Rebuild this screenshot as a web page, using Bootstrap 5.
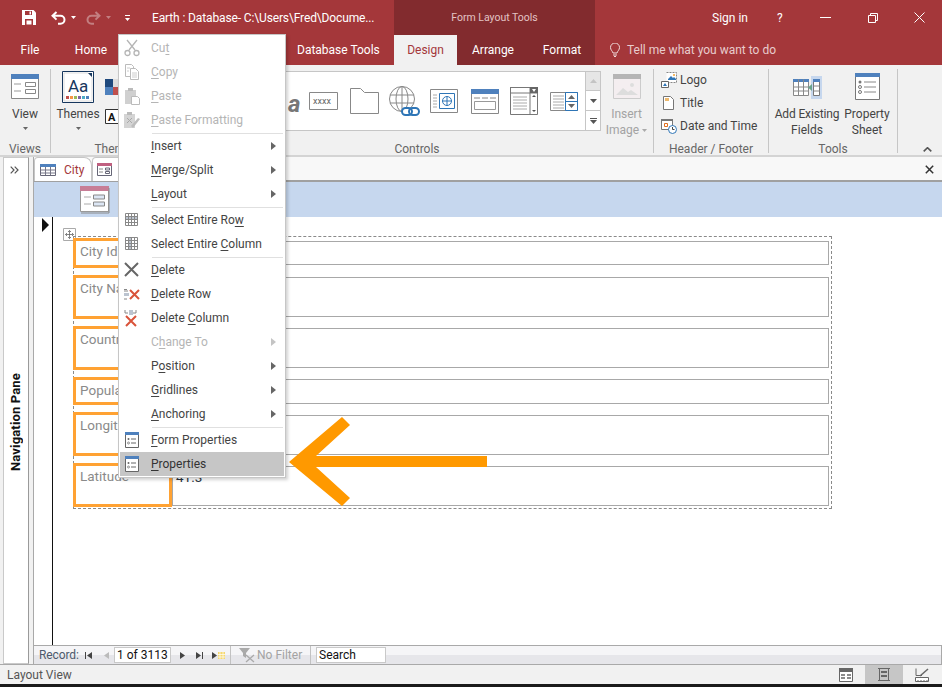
<!DOCTYPE html>
<html lang="en">
<head>
<meta charset="utf-8">
<title>Earth : Database</title>
<link href="https://cdn.jsdelivr.net/npm/bootstrap@5.3.0/dist/css/bootstrap.min.css" rel="stylesheet">
<style>
html,body{height:687px;overflow:hidden}
body{width:942px;font-family:Roboto,"Liberation Sans",sans-serif;font-size:12px;line-height:16px;color:#444;background:#fff}
svg{display:block;flex:none}
.shell{height:687px;position:relative}
.title-row{height:35px;background:#a4373a;color:#fff}
.qat{width:394px;padding-left:22px}
.qat .ttl{margin-left:22px;white-space:nowrap;letter-spacing:-.13px}
.ctx-band{width:201px;background:#822b2e;color:#e3c3c4;font-size:10.5px}
.sign{margin-left:117px;width:36px}
.tab-row{height:30px;background:#a4373a;color:#fff}
.rtab{height:30px;display:flex;align-items:center;justify-content:center;white-space:nowrap}
.rtab-file{width:60px}.rtab-home{width:62px}.rtab-hid{width:175px}.rtab-db{width:97px;justify-content:flex-start}
.ctx-tabs{width:201px;background:#822b2e}
.rtab-on{width:63px;background:#f1f1f1;color:#a4373a}
.rtab-arr{width:72px}.rtab-fmt{width:66px}
.tell{margin-left:15px;color:#e8cccd;gap:7px}
.ribbon{height:92px;background:#f1f1f1;padding-top:4px;border-bottom:2px solid #d4d4d4}
.grp{height:88px;display:flex;flex-direction:column}
.grp-body{height:72px}
.grp-label{height:16px;text-align:center;color:#666}
.rsep{width:1px;height:84px;background:#c6c6c6}
.g-views{width:50px}.g-themes{width:130px}.g-controls{width:472px}.g-hf{width:114px}.g-tools{width:128px}
.bigbtn{display:flex;flex-direction:column;align-items:center;text-align:center}
.gal{margin:2px 0 0 6px;width:399px;height:60px;background:#fff;border:1px solid #c6c6c6;padding-left:100px}
.galscroll{margin-top:2px;width:15px}
.galscroll div{height:20px;background:#fff;border:1px solid #c6c6c6;border-left:0;display:flex;align-items:center;justify-content:center}
.galscroll div+div{border-top:0}
.galscroll .off{background:#e6e6e6}
.dis{color:#a3a3a3}
.hf-list{margin-top:-1px}
.hf-row{height:23px;padding-left:7px;gap:3px}
.doc-wrap{height:507px}
.nav-col{width:34px;background:#f1f1f1;padding-left:3px}
.nav-box{width:26px;height:100%;background:#fff;border:1px solid #c9c9c9;border-right-color:#9a9a9a;position:relative}
.nav-top{height:24px;padding-right:4px}
.nav-txt{flex:1;writing-mode:vertical-rl;transform:rotate(180deg);font-weight:700;color:#111;font-size:13px;line-height:24px;text-align:center;letter-spacing:.15px}
.nav-rail{width:5px;background:#f1f1f1;border-right:1px solid #a9a9a9}
.doc-tabs{height:25px;background:#f8f8f8;border-bottom:2px solid #a0a0a0;position:relative}
.dtab{height:24px;background:#fff;border:1px solid #c6c6c6;border-bottom:0;border-top-left-radius:4px;border-top-right-radius:8px;gap:8px;padding:0 5px;color:#a4373a}
.dtab-a{width:58px}.dtab-b{width:60px;padding-left:4px}
.doc-close{position:absolute;right:8px;top:8px}
.form-band{height:35px;background:#c6d7ee;padding:4px 0 0 45px}
.form-body{height:428px;position:relative}
.selcol{width:19px;border-right:1.5px solid #111;padding:1px 0 0 8px}
.layout-outer{position:absolute;left:39px;top:19px;width:759px;height:273px;border:1px dashed #8a8a8a;padding:1px 0 0 0}
.frow{margin:0 0 7px -1px}
.flab{width:99px;border:3px solid #ffa233;color:#8a8a8a;font-size:13.5px;padding:2px 0 0 4px;line-height:17px;overflow:hidden;white-space:nowrap}
.fval{width:657px;border:1px solid #a8a8a8;color:#2a3340;font-size:13.5px;padding:2px 3px;line-height:16px}
.r1{height:30px}.r1 .fval{height:24px;margin-top:3px}
.r2{height:44px}.r2 .fval{height:40px;margin-top:2px}
.r3{height:44px}.r3 .fval{height:40px;margin-top:2px}
.r4{height:28px}.r4 .fval{height:25px;margin-top:2px}
.r5{height:44px}.r5 .fval{height:40px;margin-top:3px}
.r6{height:44px}.r6 .fval{height:40px;margin-top:3px}
.mover{position:absolute;left:29px;top:11px}
.rec-bar{height:19px;background:linear-gradient(#f5f5f7 0 50%,#e6e6ea 50%);border-top:1px solid #a9a9a9;border-right:1px solid #a9a9a9;color:#4d5a6d;padding-left:5px}
.rec-lab{width:40px;white-space:nowrap;letter-spacing:-.1px}
.rec-in{width:57px;height:16px;background:#fff;border:1px solid #c9c9c9;color:#111;padding-left:2px;line-height:14px}
.rec-div{width:1px;height:19px;background:#c2c2c2}
.status{height:20px;background:#f1f1f1;border-top:1px solid #a9a9a9;color:#555;padding-left:7px}
.vbtn{width:38px;height:19px;display:flex;align-items:center;justify-content:center}
.vbtn-on{background:#c6c6c6}
.blackline{height:3px;background:#1a1a1a}
.ctx-menu{position:absolute;left:118px;top:34px;width:168px;height:444px;background:#fff;border:1px solid #c6c6c6;box-shadow:2px 2px 3px rgba(0,0,0,.18);padding:1px 1px;z-index:5}
.mi{height:24px;position:relative;padding-left:31px;line-height:24px;color:#444;white-space:nowrap}
.mi.off{color:#b5b5b5}
.mi.sel{background:#c6c6c6;color:#333}
.mi u{text-underline-offset:2px}
.mi .mic{position:absolute;left:3px;top:3px}
.mi .mar{position:absolute;right:8px;top:8px;width:0;height:0;border-left:5px solid #666;border-top:4px solid transparent;border-bottom:4px solid transparent}
.mi.off .mar{border-left-color:#c4c4c4}
.msep{height:1px;background:#e0e0e0;margin:.5px 1px .5px 32px}
.big-arrow{position:absolute;left:289px;top:417px;z-index:6}
</style>
</head>
<body>
<div class="shell d-flex flex-column">
  <div class="title-row d-flex align-items-center">
    <div class="qat d-flex align-items-center">
      <svg width="14" height="15" viewBox="0 0 14 15"><path d="M0 0h11.500L14 2.500V15H0z" fill="#fff"/><path d="M3 1h7v4H3zM3 9h8v6H3z" fill="#a4373a"/><path d="M7.500 1.500h1.500v3H7.500zM4.500 10.500h5v4h-5z" fill="#fff"/></svg>
      <svg style="margin-left:15px" width="15" height="14" viewBox="0 0 15 14"><path d="M5.500 1 1.500 4.800l4 3.800M2 4.800h7.500a4 4 0 0 1 0 8H7" fill="none" stroke="#fff" stroke-width="2"/></svg>
      <svg style="margin-left:5px" width="5" height="3" viewBox="0 0 5 3"><path d="M0 0h5L2.500 3z" fill="#fff"/></svg>
      <svg style="margin-left:10px" width="15" height="14" viewBox="0 0 15 14"><path d="M9.500 1l4 3.800-4 3.800M13 4.800H5.500a4 4 0 0 0 0 8H8" fill="none" stroke="#c37f81" stroke-width="2"/></svg>
      <svg style="margin-left:5px" width="5" height="3" viewBox="0 0 5 3"><path d="M0 0h5L2.500 3z" fill="#c37f81"/></svg>
      <svg style="margin-left:14px" width="5" height="6" viewBox="0 0 5 6"><path d="M0 0h5v1H0zM0 3h5L2.500 6z" fill="#fff"/></svg>
      <span class="ttl">Earth : Database- C:\Users\Fred\Docume...</span>
    </div>
    <div class="ctx-band h-100 d-flex align-items-center justify-content-center">Form Layout Tools</div>
    <span class="sign">Sign in</span>
    <span style="margin-left:29px">?</span>
    <svg style="margin-left:37px" width="11" height="1" viewBox="0 0 11 1"><path d="M0 0h11v1H0z" fill="#fff"/></svg>
    <svg style="margin-left:37px" width="10" height="10" viewBox="0 0 10 10"><path d="M.5 2.500h7v7h-7zM2.500 2.500v-2h7v7h-2" fill="none" stroke="#fff"/></svg>
    <svg style="margin-left:36px" width="11" height="11" viewBox="0 0 11 11"><path d="M.5.500l10 10M10.500.500l-10 10" stroke="#fff" fill="none"/></svg>
  </div>
  <div class="tab-row d-flex">
    <div class="rtab rtab-file">File</div>
    <div class="rtab rtab-home">Home</div>
    <div class="rtab rtab-hid"></div>
    <div class="rtab rtab-db">Database Tools</div>
    <div class="ctx-tabs d-flex">
      <div class="rtab rtab-on">Design</div>
      <div class="rtab rtab-arr">Arrange</div>
      <div class="rtab rtab-fmt">Format</div>
    </div>
    <div class="tell d-flex align-items-center">
      <svg width="10" height="14" viewBox="0 0 10 14"><path d="M3 10C2.500 8 .500 7 .500 4.500a4.500 4.500 0 0 1 9 0C9.500 7 7.500 8 7 10zM3 12h4M4 13.500h2" fill="none" stroke="#f0dcdc"/></svg>
      <span>Tell me what you want to do</span>
    </div>
  </div>

  <div class="ribbon d-flex">
    <div class="grp g-views">
      <div class="grp-body bigbtn" style="padding-top:5px">
        <svg width="28" height="25" viewBox="0 0 28 25"><path d="M.5.500h27v24H.5z" fill="#fff" stroke="#888"/><path d="M0 0h28v5H0z" fill="#4f81bd"/><path d="M3 10h7M3 17h7" stroke="#999"/><path d="M14.500 8.500h10v4h-10zM14.500 15.500h10v4h-10z" fill="none" stroke="#888"/></svg>
        <span style="margin-top:7px">View</span>
        <svg style="margin-top:5px" width="5" height="3" viewBox="0 0 5 3"><path d="M0 0h5L2.500 3z" fill="#666"/></svg>
      </div>
      <div class="grp-label">Views</div>
    </div>
    <div class="rsep"></div>
    <div class="grp g-themes">
      <div class="grp-body d-flex">
        <div class="bigbtn" style="width:54px">
          <svg style="margin-top:2px" width="32" height="32" viewBox="0 0 32 32"><path d="M.5.500h31v31H.5z" fill="#fff" stroke="#17375e"/><path d="M2 2h24l4 4v24H2z" fill="#fff" stroke="#bbb" stroke-width=".5"/><path d="M26 2h4v4z" fill="#17375e"/><text x="6" y="21" font-family="Roboto,sans-serif" font-size="17" fill="#17375e">Aa</text><path d="M4 25h3v3H4z" fill="#c0504d"/><path d="M8 25h3v3H8z" fill="#f79646"/><path d="M12 25h3v3h-3z" fill="#9bbb59"/><path d="M16 25h3v3h-3z" fill="#8064a2"/><path d="M20 25h3v3h-3z" fill="#4bacc6"/><path d="M24 25h3v3h-3z" fill="#4f81bd"/></svg>
          <span style="margin-top:3px">Themes</span>
          <svg style="margin-top:5px" width="5" height="3" viewBox="0 0 5 3"><path d="M0 0h5L2.500 3z" fill="#666"/></svg>
        </div>
        <div class="d-flex flex-column" style="gap:14px;padding-top:10px">
          <svg width="16" height="16" viewBox="0 0 16 16"><path d="M0 0h8v8H0z" fill="#1f497d"/><path d="M8 0h8v8H8z" fill="#ddd"/><path d="M0 8h8v8H0z" fill="#4f81bd"/><path d="M8 8h8v8H8z" fill="#c0504d"/></svg>
          <svg width="14" height="15" viewBox="0 0 14 15"><path d="M.5.500h13v14H.5z" fill="#fff" stroke="#333"/><text x="3" y="12" font-family="Roboto,sans-serif" font-size="11" font-weight="700" fill="#111">A</text></svg>
        </div>
      </div>
      <div class="grp-label">Themes</div>
    </div>
    <div class="grp g-controls">
      <div class="grp-body d-flex">
        <div class="gal d-flex align-items-center">
          <span style="font-size:24px;font-style:italic;color:#777;font-weight:700;width:21px;margin-top:6px">a</span>
          <svg width="29" height="18" viewBox="0 0 29 18"><path d="M.5.500h28v17H.5z" fill="#fff" stroke="#888"/><text x="4" y="12" font-family="Roboto,sans-serif" font-size="9" fill="#666">xxxx</text></svg>
          <svg style="margin-left:12px" width="29" height="26" viewBox="0 0 29 26"><path d="M.5 25.500V.500h10l4 4h14v21z" fill="#fff" stroke="#888"/></svg>
          <svg style="margin-left:10px" width="32" height="31" viewBox="0 0 32 31"><g fill="none" stroke="#888"><circle cx="13" cy="13" r="12.500"/><ellipse cx="13" cy="13" rx="6" ry="12.500"/><path d="M13 .500v25M1 9h24M1 17h24"/></g><rect x="13" y="22" width="10" height="7" rx="3.500" fill="#fff" stroke="#2e75b6" stroke-width="2"/><rect x="20" y="22" width="10" height="7" rx="3.500" fill="none" stroke="#2e75b6" stroke-width="2"/></svg>
          <svg style="margin-left:9px" width="28" height="24" viewBox="0 0 28 24"><path d="M.5.500h27v23H.5z" fill="#fff" stroke="#888"/><path d="M3 6h4M3 9h4M3 12h4M3 15h4M3 18h4" stroke="#aaa"/><path d="M9.500 4.500h15v15h-15z" fill="#fff" stroke="#2e75b6"/><circle cx="17" cy="12" r="4.500" fill="none" stroke="#2e75b6"/><path d="M12.500 12h9M17 7.500v9" stroke="#2e75b6"/></svg>
          <svg style="margin-left:13px" width="28" height="25" viewBox="0 0 28 25"><path d="M.5.500h27v24H.5z" fill="#fff" stroke="#888"/><path d="M0 0h28v5H0z" fill="#4f81bd"/><path d="M3 9h6M11 9h6M19 9h6" stroke="#888"/><path d="M3.500 12.500h21v8h-21z" fill="none" stroke="#999"/></svg>
          <svg style="margin-left:11px" width="28" height="28" viewBox="0 0 28 28"><path d="M.5.500h27v27H.5z" fill="#fff" stroke="#777"/><path d="M0 .500h28M.5 6h27M20 .500v27" stroke="#777"/><path d="M20 0h8v6h-8z" fill="#666"/><path d="M22 2h4l-2 3z" fill="#fff"/><path d="M3 10h14M3 13h14M3 16h14M3 19h14M3 22h14" stroke="#aaa"/><path d="M22 10h4l-2-2zM22 23h4l-2 2z" fill="#555"/></svg>
          <svg style="margin-left:12px" width="28" height="19" viewBox="0 0 28 19"><path d="M.5.500h27v18H.5z" fill="#fff" stroke="#888"/><path d="M3 4h11M3 7h11M3 10h11M3 13h11M3 16h11" stroke="#aaa"/><path d="M15.500.500h12v18h-12zM15.500 9.500h12" fill="none" stroke="#2e75b6"/><path d="M18 7h7l-3.500-4zM18 12h7l-3.500 4z" fill="#666"/></svg>
        </div>
        <div class="galscroll">
          <div class="off"><svg width="7" height="4" viewBox="0 0 7 4"><path d="M0 4h7L3.500 0z" fill="#c4c4c4"/></svg></div>
          <div><svg width="7" height="4" viewBox="0 0 7 4"><path d="M0 0h7L3.500 4z" fill="#555"/></svg></div>
          <div><svg width="7" height="6" viewBox="0 0 7 6"><path d="M0 0h7v1H0zM0 2h7L3.500 6z" fill="#555"/></svg></div>
        </div>
        <div class="bigbtn dis" style="width:51px;padding-top:5px">
          <svg width="28" height="25" viewBox="0 0 28 25"><path d="M.5.500h27v24H.5z" fill="#f4eef0" stroke="#ccc"/><path d="M0 0h28v5H0z" fill="#b5b5b5"/><path d="M3 21l7-7 5 4 3-2 7 5z" fill="#ddd"/><circle cx="19" cy="11" r="2" fill="#ddd"/></svg>
          <span style="margin-top:7px">Insert</span>
          <span>Image<svg class="d-inline" style="margin-left:3px;vertical-align:middle" width="5" height="3" viewBox="0 0 5 3"><path d="M0 0h5L2.500 3z" fill="#aaa"/></svg></span>
        </div>
      </div>
      <div class="grp-label">Controls</div>
    </div>
    <div class="rsep"></div>
    <div class="grp g-hf">
      <div class="grp-body hf-list">
        <div class="hf-row d-flex align-items-center">
          <svg width="16" height="16" viewBox="0 0 16 16"><path d="M5.500.500h10v10h-10" fill="#fff" stroke="#888" stroke-dasharray="2 1"/><path d="M7 7l3-3 2 2 1-1 2 2v1H7z" fill="#2e75b6"/><circle cx="13" cy="3" r="1" fill="#f0a030"/><path d="M.5 9.500h7v6h-7z" fill="#fff" stroke="#666"/><path d="M2 14l2-3 2 3z" fill="#2e75b6"/></svg>
          <span>Logo</span>
        </div>
        <div class="hf-row d-flex align-items-center">
          <svg style="margin-left:2px;margin-right:3px" width="11" height="14" viewBox="0 0 11 14"><path d="M.5.500h7l3 3v10H.5z" fill="#fff" stroke="#777"/><path d="M2 2h4v3H2z" fill="#edb96e"/></svg>
          <span>Title</span>
        </div>
        <div class="hf-row d-flex align-items-center">
          <svg width="16" height="16" viewBox="0 0 16 16"><path d="M.5 1.500h11v10H.5z" fill="#fff" stroke="#777"/><path d="M0 1h12v2H0z" fill="#777"/><path d="M3.500 5.500h3v3h-3z" fill="none" stroke="#e07020"/><circle cx="11.500" cy="11.500" r="4" fill="#fff" stroke="#2e75b6"/><path d="M11.500 9v2.500h2" fill="none" stroke="#444"/></svg>
          <span>Date and Time</span>
        </div>
      </div>
      <div class="grp-label" style="margin-top:1px">Header / Footer</div>
    </div>
    <div class="rsep"></div>
    <div class="grp g-tools">
      <div class="grp-body d-flex">
        <div class="bigbtn" style="width:76px;padding-top:7px">
          <svg width="29" height="23" viewBox="0 0 29 23"><path d="M18 0h11v23H18z" fill="#c6d7ee"/><path d="M.5 3.500h15v16H.5z" fill="#fff" stroke="#888"/><path d="M0 3h16v3H0z" fill="#4f81bd"/><path d="M.5 11h15M.5 15h15M5.500 3.500v16M10.500 3.500v16" stroke="#888"/><path d="M20.500 3.500h6v16h-6z" fill="#fff" stroke="#777"/><path d="M20 3h7v3h-7z" fill="#4f81bd"/><path d="M20.500 10h6M20.500 15h6" stroke="#888"/><path d="M19 8v7l-4-3.500z" fill="#6aa58e"/></svg>
          <span style="margin-top:7px;white-space:nowrap;letter-spacing:-.15px">Add Existing</span>
          <span>Fields</span>
        </div>
        <div class="bigbtn" style="width:50px;margin-left:-3px;padding-top:4px">
          <svg width="25" height="27" viewBox="0 0 25 27"><path d="M.5.500h24v26H.5z" fill="#fff" stroke="#777"/><path d="M0 0h25v4H0z" fill="#4f81bd"/><path d="M9 9h12M9 14h12M9 19h12" stroke="#888"/><circle cx="5" cy="9" r="1.500" fill="#777"/><circle cx="5" cy="14" r="1.500" fill="none" stroke="#777"/><circle cx="5" cy="19" r="1.500" fill="none" stroke="#777"/></svg>
          <span style="margin-top:6px;white-space:nowrap">Property</span>
          <span>Sheet</span>
        </div>
      </div>
      <div class="grp-label">Tools</div>
    </div>
    <div class="rsep"></div>
    <div class="ms-auto align-self-end" style="padding:0 10px 3px 0"><svg width="9" height="5" viewBox="0 0 9 5"><path d="M.7 4.300l3.800-3.600 3.800 3.600" fill="none" stroke="#555" stroke-width="1.600"/></svg></div>
  </div>

  <div class="doc-wrap d-flex">
    <div class="nav-col d-flex">
      <div class="nav-box d-flex flex-column">
        <div class="nav-top d-flex align-items-center justify-content-center"><svg width="9" height="8" viewBox="0 0 9 8"><path d="M.7.700l3.300 3.300-3.300 3.300M4.700.700l3.300 3.300-3.300 3.300" fill="none" stroke="#555" stroke-width="1.200"/></svg></div>
        <div class="nav-txt">Navigation Pane</div>
      </div>
      <div class="nav-rail"></div>
    </div>
    <div class="flex-fill d-flex flex-column">
      <div class="doc-tabs d-flex">
        <div class="dtab dtab-a d-flex align-items-center">
          <svg width="16" height="12" viewBox="0 0 16 12"><path d="M.5.500h15v11H.5z" fill="#fff" stroke="#667"/><path d="M0 0h16v3H0z" fill="#4f81bd"/><path d="M.5 6h15M.5 9h15M5.500 3v8M10.500 3v8" stroke="#778"/></svg>
          <span>City</span>
        </div>
        <div class="dtab dtab-b d-flex align-items-center">
          <svg width="15" height="13" viewBox="0 0 15 13"><path d="M.5.500h14v12H.5z" fill="#fff" stroke="#667"/><path d="M0 0h15v3H0z" fill="#c06080"/><path d="M2 6h4M2 9h4" stroke="#888"/><path d="M8.500 5h4v2h-4zM8.500 8.500h4v2h-4z" fill="none" stroke="#667"/></svg>
        </div>
        <svg class="doc-close" width="9" height="9" viewBox="0 0 9 9"><path d="M.8.800l7.400 7.400M8.200.800l-7.400 7.400" stroke="#333" stroke-width="1.500"/></svg>
      </div>
      <div class="form-band d-flex align-items-start">
        <svg width="31" height="28" viewBox="0 0 31 28"><path d="M1.500.500h28v25h-28z" fill="#fff" stroke="#999"/><path d="M1 0h29v5H1z" fill="#c77d96"/><path d="M5 11h7M5 18h7" stroke="#aaa"/><path d="M14.500 9h11v4h-11zM14.500 16h11v4h-11z" fill="#dce6f4" stroke="#888"/><path d="M30 2v25H2" fill="none" stroke="#8a8a8a"/></svg>
      </div>
      <div class="form-body d-flex">
        <div class="selcol"><svg width="7" height="14" viewBox="0 0 7 14"><path d="M0 0l7 7-7 7z" fill="#111"/></svg></div>
        <svg class="mover" width="13" height="13" viewBox="0 0 13 13"><path d="M.5.500h12v12H.5z" fill="#fff" stroke="#aaa"/><path d="M6.500 2.500v8M2.500 6.500h8M5 4l1.500-1.500L8 4M5 9l1.500 1.500L8 9M4 5L2.500 6.500 4 8M9 5l1.500 1.500L9 8" fill="none" stroke="#666" stroke-width=".8"/></svg>
        <div class="layout-outer">
          <div class="frow r1 d-flex"><div class="flab">City Id</div><div class="fval"></div></div>
          <div class="frow r2 d-flex"><div class="flab">City Name</div><div class="fval"></div></div>
          <div class="frow r3 d-flex"><div class="flab">Country</div><div class="fval"></div></div>
          <div class="frow r4 d-flex"><div class="flab">Population</div><div class="fval"></div></div>
          <div class="frow r5 d-flex"><div class="flab">Longitude</div><div class="fval"></div></div>
          <div class="frow r6 d-flex"><div class="flab">Latitude</div><div class="fval">41.3</div></div>
        </div>
      </div>
      <div class="rec-bar d-flex align-items-center">
        <span class="rec-lab">Record:</span>
        <svg style="margin-left:6px" width="7" height="7" viewBox="0 0 7 7"><path d="M0 0h1v7H0zM7 0v7L2 3.500z" fill="#444"/></svg>
        <svg style="margin-left:12px" width="5" height="7" viewBox="0 0 5 7"><path d="M5 0v7L0 3.500z" fill="#bbb"/></svg>
        <div class="rec-in" style="margin-left:5px">1 of 3113</div>
        <svg style="margin-left:9px" width="5" height="7" viewBox="0 0 5 7"><path d="M0 0v7l5-3.500z" fill="#444"/></svg>
        <svg style="margin-left:11px" width="7" height="7" viewBox="0 0 7 7"><path d="M7 0H6v7h1zM0 0v7l5-3.500z" fill="#444"/></svg>
        <svg style="margin-left:9px" width="13" height="7" viewBox="0 0 13 7"><path d="M0 0v7l5-3.500z" fill="#444"/><path d="M6 0h7v7H6z" fill="#f5d76e"/><path d="M8 0v7M11 0v7M6 2.500h7M6 5h7" stroke="#fff" stroke-width=".7"/></svg>
        <div class="rec-div" style="margin-left:5px"></div>
        <svg style="margin-left:8px" width="16" height="15" viewBox="0 0 16 15"><path d="M0 0h11L7 5v5L4 8V5z" fill="#aaa"/><path d="M7 7l8 7M15 7l-8 7" stroke="#aaa" stroke-width="1.300"/></svg>
        <span class="dis" style="margin-left:2px;width:44px;white-space:nowrap">No Filter</span>
        <div class="rec-div" style="margin-left:9px"></div>
        <div class="rec-in" style="margin-left:5px;width:70px">Search</div>
      </div>
    </div>
  </div>

  <div class="status d-flex align-items-center">
    <span>Layout View</span>
    <div class="ms-auto d-flex">
      <div class="vbtn"><svg width="14" height="14" viewBox="0 0 14 14"><path d="M.5.500h13v13H.5z" fill="#fff" stroke="#666"/><path d="M0 0h14v4H0z" fill="#666"/><path d="M2 7h4M8 7h4M2 10h4M8 10h4" stroke="#666" stroke-width="1.500"/></svg></div>
      <div class="vbtn vbtn-on"><svg width="12" height="13" viewBox="0 0 12 13"><path d="M0 .500h12M0 12.500h12M1.500 0v13M10.500 0v13" stroke="#666"/><path d="M3 4h6M3 8h6" stroke="#666" stroke-width="2"/></svg></div>
      <div class="vbtn" style="margin-right:1px"><svg width="14" height="14" viewBox="0 0 14 14"><path d="M.5 9.500h13v4H.5z" fill="#fff" stroke="#666"/><path d="M3 12v1M6 12v1M9 12v1M12 12v1" stroke="#666"/><path d="M1 .500v7M1 7.500h6" stroke="#666"/><path d="M5 8l8-7" stroke="#666" stroke-width="1.500"/></svg></div>
    </div>
  </div>
  <div class="blackline"></div>

  <div class="ctx-menu">
    <div class="mi off"><svg class="mic" width="18" height="18" viewBox="0 0 18 18"><g fill="none" stroke="#b5b5b5" stroke-width="1.300"><path d="M4 1l8 10M14 1L6 11"/><circle cx="4.500" cy="14" r="2.500"/><circle cx="13.500" cy="14" r="2.500"/></g></svg>Cu<u>t</u></div>
    <div class="mi off"><svg class="mic" width="18" height="18" viewBox="0 0 18 18"><path d="M2.500 1.500h6l2 2v10h-8z" fill="#fff" stroke="#bbb"/><path d="M7.500 5.500h5l3 3v8h-8z" fill="#fff" stroke="#bbb"/><path d="M9 10h5M9 12h5M9 14h5M4 5h3M4 8h2" stroke="#ccc"/></svg><u>C</u>opy</div>
    <div class="mi off"><svg class="mic" width="18" height="18" viewBox="0 0 18 18"><path d="M2 3h11v14H2z" fill="#d0d0d0"/><path d="M5 1h5v3H5z" fill="#bbb"/><path d="M8.500 9.500h6l2 2v6h-8z" fill="#fff" stroke="#bbb"/></svg><u>P</u>aste</div>
    <div class="mi off"><svg class="mic" width="18" height="18" viewBox="0 0 18 18"><path d="M1 3h11v14H1z" fill="#d4d4d4"/><path d="M4 1h5v3H4z" fill="#bbb"/><path d="M4 7l5 5M9 7l-5 5" stroke="#aaa"/><path d="M10 17l7-9-2-1-7 8z" fill="#bdbdbd"/></svg><u>P</u>aste Formatting</div>
    <div class="msep"></div>
    <div class="mi"><u>I</u>nsert<span class="mar"></span></div>
    <div class="mi"><u>M</u>erge/Split<span class="mar"></span></div>
    <div class="mi"><u>L</u>ayout<span class="mar"></span></div>
    <div class="msep"></div>
    <div class="mi"><svg class="mic" width="18" height="18" viewBox="0 0 18 18"><path d="M2.500 2.500h12v12h-12z" fill="#fff" stroke="#888"/><path d="M3 6h11v3H3z" fill="#bcc4d0"/><path d="M2.500 5.500h12M2.500 8.500h12M2.500 11.500h12M5.500 2.500v12M8.500 2.500v12M11.500 2.500v12" stroke="#888"/></svg>Select Entire Ro<u>w</u></div>
    <div class="mi"><svg class="mic" width="18" height="18" viewBox="0 0 18 18"><path d="M2.500 2.500h12v12h-12z" fill="#fff" stroke="#888"/><path d="M6 3h3v11H6z" fill="#bcc4d0"/><path d="M2.500 5.500h12M2.500 8.500h12M2.500 11.500h12M5.500 2.500v12M8.500 2.500v12M11.500 2.500v12" stroke="#888"/></svg>Select Entire <u>C</u>olumn</div>
    <div class="msep"></div>
    <div class="mi"><svg class="mic" width="18" height="18" viewBox="0 0 18 18"><path d="M2 2l13 13M15 2L2 15" stroke="#666" stroke-width="2"/></svg><u>D</u>elete</div>
    <div class="mi"><svg class="mic" width="18" height="18" viewBox="0 0 18 18"><path d="M1 6h4M1 4.500h3M1 14h3" stroke="#888"/><path d="M1 8h5v3H1z" fill="#bcc4d0"/><path d="M7 5l9 9M16 5l-9 9" stroke="#d9533a" stroke-width="2"/></svg><u>D</u>elete Row</div>
    <div class="mi"><svg class="mic" width="18" height="18" viewBox="0 0 18 18"><path d="M2 1v3h3M13 1v3h-3" fill="none" stroke="#888"/><path d="M6 1h4v5H6z" fill="#bcc4d0"/><path d="M3 7l10 10M13 7L3 17" stroke="#d9533a" stroke-width="2"/></svg>Delete <u>C</u>olumn</div>
    <div class="mi off">C<u>h</u>ange To<span class="mar"></span></div>
    <div class="mi">P<u>o</u>sition<span class="mar"></span></div>
    <div class="mi"><u>G</u>ridlines<span class="mar"></span></div>
    <div class="mi"><u>A</u>nchoring<span class="mar"></span></div>
    <div class="msep"></div>
    <div class="mi"><svg class="mic" width="18" height="18" viewBox="0 0 18 18"><path d="M2.500 1.500h13v15h-13z" fill="#fff" stroke="#666"/><path d="M2 1h14v3H2z" fill="#4f81bd"/><path d="M8 8h5M8 12h5" stroke="#666"/><circle cx="5.500" cy="8" r="1" fill="#666"/><circle cx="5.500" cy="12" r="1" fill="none" stroke="#666" stroke-width=".7"/></svg><u>F</u>orm Properties</div>
    <div class="mi sel"><svg class="mic" width="18" height="18" viewBox="0 0 18 18"><path d="M2.500 1.500h13v15h-13z" fill="#fff" stroke="#666"/><path d="M2 1h14v3H2z" fill="#4f81bd"/><path d="M8 8h5M8 12h5" stroke="#666"/><circle cx="5.500" cy="8" r="1" fill="#666"/><circle cx="5.500" cy="12" r="1" fill="none" stroke="#666" stroke-width=".7"/></svg><u>P</u>roperties</div>
  </div>
  <svg class="big-arrow" width="198" height="90" viewBox="0 0 198 90"><path d="M0 45 53 0l8 8-34 31H198v11H27l34 31-8 8z" fill="#ff9900"/></svg>
</div>
<script src="https://cdn.jsdelivr.net/npm/bootstrap@5.3.0/dist/js/bootstrap.bundle.min.js"></script>
</body>
</html>
